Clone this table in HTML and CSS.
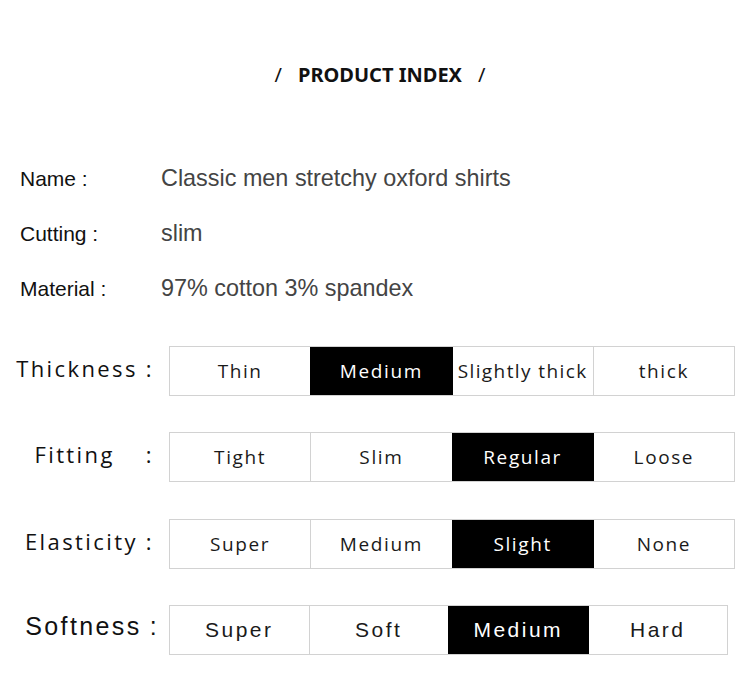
FILE: index.html
```html
<!DOCTYPE html>
<html>
<head>
<meta charset="utf-8">
<link rel="stylesheet" href="styles.css">
</head>
<body>
<div class="page">
  <h1 class="title"><span class="slash">/</span><span class="title-text">PRODUCT INDEX</span><span class="slash">/</span></h1>

  <div class="info">
    <div class="info-row"><span class="info-key">Name :</span><span class="info-val">Classic men stretchy oxford shirts</span></div>
    <div class="info-row"><span class="info-key">Cutting :</span><span class="info-val">slim</span></div>
    <div class="info-row"><span class="info-key">Material :</span><span class="info-val">97% cotton 3% spandex</span></div>
  </div>

  <div class="ratings">
    <div class="rating r1">
      <div class="label"><span class="name">Thickness</span><span class="colon">:</span></div>
      <div class="scale">
        <div class="cell">Thin</div>
        <div class="cell on">Medium</div>
        <div class="cell">Slightly thick</div>
        <div class="cell">thick</div>
      </div>
    </div>
    <div class="rating r2">
      <div class="label label-wide"><span class="name">Fitting</span><span class="colon">:</span></div>
      <div class="scale">
        <div class="cell">Tight</div>
        <div class="cell">Slim</div>
        <div class="cell on">Regular</div>
        <div class="cell">Loose</div>
      </div>
    </div>
    <div class="rating r3">
      <div class="label"><span class="name">Elasticity</span><span class="colon">:</span></div>
      <div class="scale">
        <div class="cell">Super</div>
        <div class="cell">Medium</div>
        <div class="cell on">Slight</div>
        <div class="cell">None</div>
      </div>
    </div>
    <div class="rating r4 arial">
      <div class="label"><span class="name">Softness</span><span class="colon">:</span></div>
      <div class="scale scale-narrow">
        <div class="cell">Super</div>
        <div class="cell">Soft</div>
        <div class="cell on">Medium</div>
        <div class="cell">Hard</div>
      </div>
    </div>
  </div>
</div>
</body>
</html>
```

FILE: styles.css
```css
html, body {
  margin: 0;
  padding: 0;
  background: #fff;
}
.page {
  width: 750px;
  height: 690px;
  overflow: hidden;
  font-family: "Liberation Sans", Arial, sans-serif;
  color: #111;
}
.title {
  margin: 0;
  padding-top: 61px;
  height: 26px;
  display: flex;
  justify-content: center;
  align-items: center;
  font-family: "Noto Sans", "Open Sans", sans-serif;
  font-weight: 700;
  font-size: 20px;
  color: #111;
  padding-left: 10px;
}
.title-text {
  margin: 0 16px;
  letter-spacing: 0px;
}
.slash {
  font-weight: 400;
  font-size: 20px;
}
.info {
  margin-top: 78px;
  display: flex;
  flex-direction: column;
  gap: 29px;
}
.info-row {
  display: flex;
  align-items: baseline;
  height: 26px;
  line-height: 26px;
}
.info-key {
  width: 141px;
  padding-left: 20px;
  font-size: 21px;
  color: #111;
}
.info-val {
  font-size: 23.4px;
  color: #444;
}
.ratings {
  margin-top: 45px;
  display: flex;
  flex-direction: column;
  gap: 36.3px;
}
.rating {
  display: flex;
  align-items: center;
  height: 50px;
}
.label {
  width: 169px;
  box-sizing: border-box;
  padding-right: 15px;
  display: flex;
  justify-content: flex-end;
  gap: 8px;
  font-family: "Open Sans", "Noto Sans", sans-serif;
  font-size: 22px;
  letter-spacing: 2.4px;
  color: #111;
  margin-top: -6px;
}
.label-wide .name {
  margin-right: 23px;
}
.scale {
  display: flex;
  width: 566px;
  height: 50px;
  box-sizing: border-box;
  border: 1px solid #d2d2d2;
}
.scale-narrow {
  width: 559px;
}
.cell {
  flex: 1;
  display: flex;
  align-items: center;
  justify-content: center;
  border-left: 1px solid #d2d2d2;
  font-family: "Open Sans", "Noto Sans", sans-serif;
  font-size: 19px;
  letter-spacing: 1.6px;
  color: #1a1a1a;
  white-space: nowrap;
}
.cell:first-child {
  border-left: none;
}
.cell.on {
  background: #000;
  color: #fff;
  border-left-color: #000;
}
.cell.on + .cell {
  border-left-color: #000;
}
.arial .label,
.arial .cell {
  font-family: "Liberation Sans", Arial, sans-serif;
}
.arial .label {
  font-size: 25px;
  letter-spacing: 2.4px;
  padding-right: 10px;
}
.arial .cell {
  font-size: 21px;
  letter-spacing: 2.5px;
}
.r1 .cell:nth-child(3) {
  letter-spacing: 1.4px;
}
```
